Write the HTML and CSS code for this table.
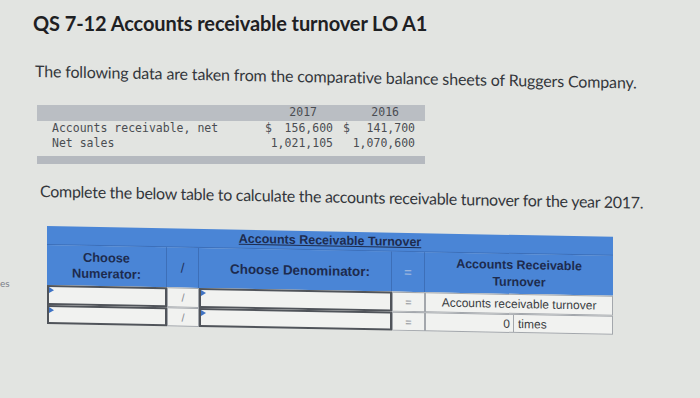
FILE: index.html
```html
<!DOCTYPE html>
<html lang="en">
<head>
<meta charset="utf-8">
<title>QS 7-12 Accounts receivable turnover</title>
<link rel="stylesheet" href="styles.css">
</head>
<body>
<div class="page">
  <aside class="side"><span class="side-text">es</span></aside>
  <main class="main">
    <h1 class="title">QS 7-12 Accounts receivable turnover LO A1</h1>
    <p class="lead lead-1">The following data are taken from the comparative balance sheets of Ruggers Company.</p>
    <div class="data">
      <div class="data-row data-head"><span class="lbl"></span><span class="yr">2017</span><span class="yr">2016</span></div>
      <div class="data-row"><span class="lbl">Accounts receivable, net</span><span class="val"><span>$</span><span>156,600</span></span><span class="val"><span>$</span><span>141,700</span></span></div>
      <div class="data-row"><span class="lbl">Net sales</span><span class="val"><span></span><span>1,021,105</span></span><span class="val"><span></span><span>1,070,600</span></span></div>
      <div class="data-foot"></div>
    </div>
    <p class="lead lead-2">Complete the below table to calculate the accounts receivable turnover for the year 2017.</p>
    <div class="calc">
      <div class="calc-title"><span>Accounts Receivable Turnover</span></div>
      <div class="hd hd-first">Choose<br>Numerator:</div>
      <div class="hd hd-op">/</div>
      <div class="hd hd-den">Choose Denominator:</div>
      <div class="hd hd-eq">=</div>
      <div class="hd hd-last">Accounts Receivable<br>Turnover</div>

      <div class="cell pick"></div>
      <div class="cell op">/</div>
      <div class="cell pick"></div>
      <div class="cell op">=</div>
      <div class="cell res">Accounts receivable turnover</div>

      <div class="cell pick"></div>
      <div class="cell op">/</div>
      <div class="cell pick"></div>
      <div class="cell op">=</div>
      <div class="cell res split"><span class="num">0</span><span class="unit">times</span></div>
    </div>
  </main>
</div>
</body>
</html>
```
FILE: styles.css
```css
* { box-sizing: border-box; }

body {
  margin: 0;
  background: #e2e4e1;
  font-family: Lato, "Liberation Sans", sans-serif;
  color: #2b2e33;
}

.page {
  display: flex;
  width: 700px;
  height: 398px;
  overflow: hidden;
}

.side {
  width: 12px;
  flex: none;
  padding-top: 277px;
  padding-right: 3px;
  text-align: right;
  font-size: 10px;
  color: #7b8088;
  overflow: hidden;
}

.main {
  flex: 1;
  padding-top: 11px;
}

.title {
  margin: 0 0 0 21px;
  font: 700 20px/24px Lato, sans-serif;
  letter-spacing: -0.1px;
  color: #1e2023;
}

.lead {
  margin: 26px 0 0 23px;
  font-size: 16px;
  line-height: 20px;
  letter-spacing: -0.28px;
  color: #34373c;
  white-space: nowrap;
  transform: skewY(1.1deg);
  transform-origin: 0 0;
}

.lead-1 {
  letter-spacing: -0.14px;
}

.lead-2 {
  margin: 17px 0 0 28px;
}

.data {
  margin: 24px 0 0 25px;
  width: 388px;
  font-family: "DejaVu Sans Mono", "Liberation Mono", monospace;
  font-size: 11.5px;
  color: #4a4d52;
}

.data-row {
  display: grid;
  grid-template-columns: 1fr 78px 82px;
  padding: 0 10px 0 15px;
  line-height: 15px;
  white-space: pre;
}

.data-head {
  background: #babec3;
  line-height: 14px;
  padding-bottom: 2px;
}

.yr {
  text-align: right;
  padding-right: 16px;
}

.val {
  display: flex;
  justify-content: space-between;
  padding-left: 10px;
}

.data-foot {
  height: 8px;
  margin-top: 5px;
  background: #b5b9bf;
}

.calc {
  margin: 25px 0 0 35px;
  width: 566px;
  display: grid;
  grid-template-columns: 120px 32px 193px 33px 188px;
  grid-template-rows: 19px 40px 20px 19px;
  font-family: "Liberation Sans", Arial, sans-serif;
  transform: skewY(1.1deg);
  transform-origin: 0 0;
}

.calc-title {
  grid-column: 1 / -1;
  background: #4a85d6;
  border-bottom: 1px solid #3d6fb8;
  text-align: center;
  font-weight: 700;
  font-size: 12.5px;
  line-height: 18px;
  color: #1d2b4e;
}

.calc-title span {
  text-decoration: underline;
}

.hd {
  background: #4a85d6;
  border-right: 1px solid #3d6fb8;
  display: flex;
  align-items: center;
  justify-content: center;
  text-align: center;
  font-weight: 700;
  font-size: 13.4px;
  line-height: 17px;
  color: #1d2b4e;
}

.hd-first {
  font-size: 12.8px;
  line-height: 16px;
}

.hd-den {
  padding-left: 10px;
}

.hd-op {
  font-weight: 400;
  color: #22325a;
}

.hd-eq {
  font-weight: 400;
  color: #a9bfe0;
}

.hd-last {
  border-right: none;
  font-size: 12.5px;
  line-height: 17px;
}

.cell {
  position: relative;
  background: #f1f2f0;
  border: 1px solid #a3a7ac;
  display: flex;
  align-items: center;
  justify-content: center;
  font-size: 12px;
  color: #3b3e43;
}

.pick {
  border: 2px solid #50545a;
}

.pick::before {
  content: "";
  position: absolute;
  left: 0;
  top: 0;
  border-left: 5px solid #3f73c4;
  border-top: 3px solid transparent;
  border-bottom: 3px solid transparent;
}

.op {
  font-size: 11px;
  color: #8a8e94;
}

.split {
  display: grid;
  grid-template-columns: 88px 1fr;
  align-items: stretch;
}

.num {
  display: flex;
  align-items: center;
  justify-content: flex-end;
  padding-right: 3px;
  border-right: 1px solid #a3a7ac;
}

.unit {
  display: flex;
  align-items: center;
  padding-left: 4px;
}
```
